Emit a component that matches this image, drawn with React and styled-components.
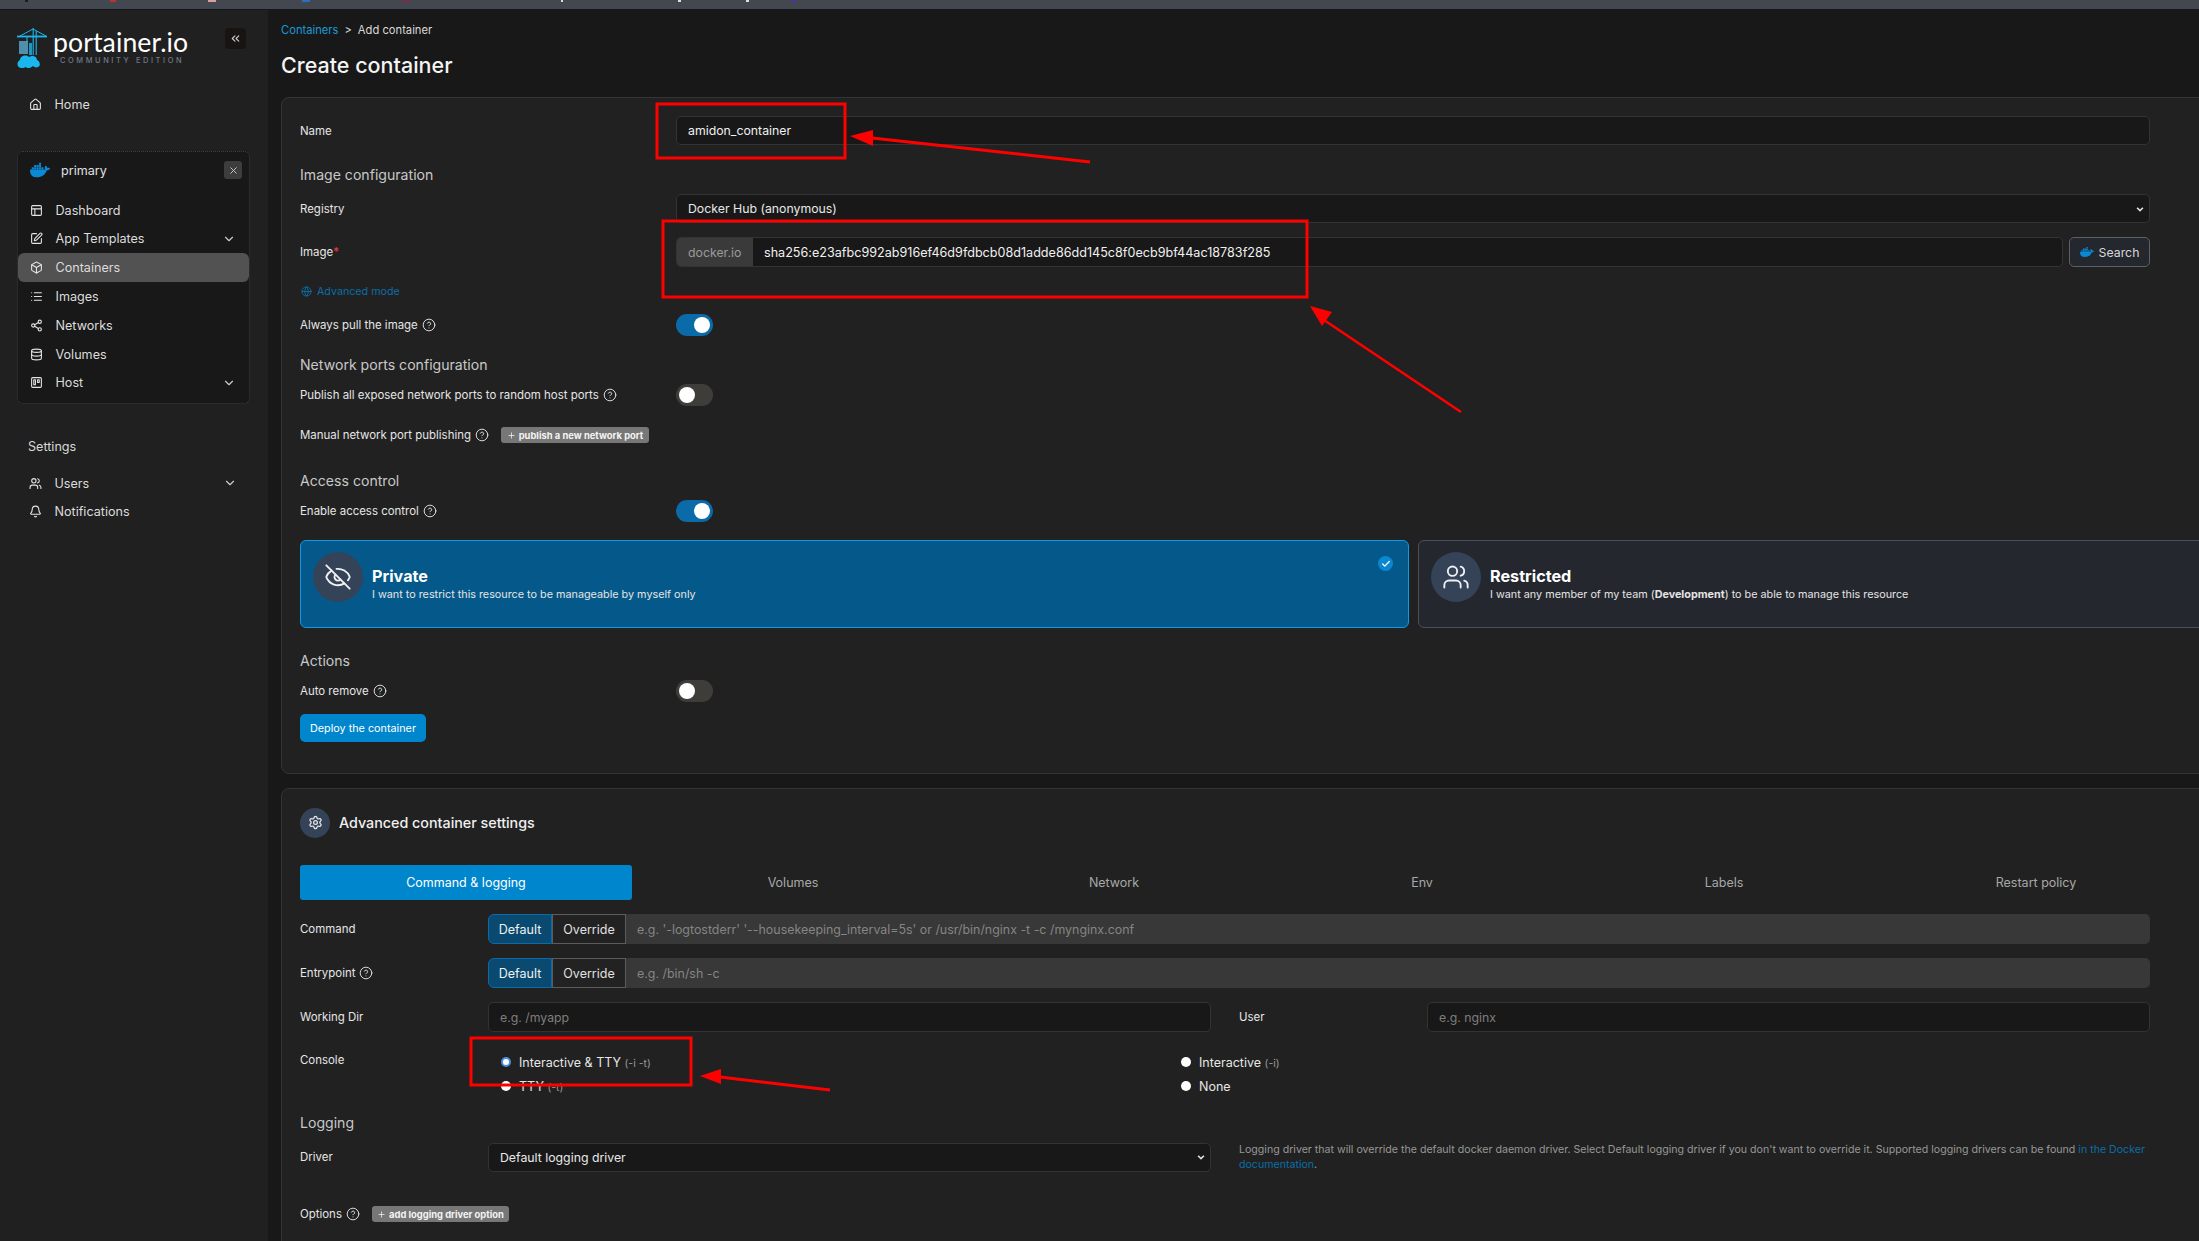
import React from 'react';
import styled, { createGlobalStyle } from 'styled-components';
import {
  Home, Layout, SquarePen, Box, List, Share2, Database, Trello, Users, Bell,
  ChevronDown, ChevronsLeft, X, CircleHelp, EyeOff, Globe, Settings, Plus, Check,
} from 'lucide-react';
import { SiDocker } from 'react-icons/si';

const GlobalStyle = createGlobalStyle`
  html, body {
    margin: 0;
    padding: 0;
    overflow: hidden;
    background: #181818;
  }
  * { box-sizing: border-box; }
`;

const Page = styled.div`
  position: relative;
  width: 2199px;
  height: 1241px;
  overflow: hidden;
  display: flex;
  flex-direction: column;
  font-family: Inter, "Liberation Sans", sans-serif;
  font-size: 12px;
  color: #e0e0e0;
`;

const TopBar = styled.div`
  height: 10px;
  flex: none;
  display: flex;
  align-items: flex-start;
  background: #434750;
  border-bottom: 1px solid #14161a;
`;

const TabMark = styled.span`
  width: ${p => p.$w}px;
  height: 2px;
  margin-left: ${p => p.$gap}px;
  background: ${p => p.$color};
`;

const Shell = styled.div`
  flex: 1;
  display: flex;
  min-height: 0;
`;

const Sidebar = styled.aside`
  width: 268px;
  flex: none;
  background: #202020;
  padding: 18px 18px 0 17px;
`;

const LogoRow = styled.div`
  display: flex;
  justify-content: space-between;
  align-items: flex-start;
  height: 41px;
`;

const Logo = styled.div`
  display: flex;
  align-items: flex-start;
`;

const LogoWords = styled.div`
  margin-left: 6px;
  margin-top: 2px;
`;

const LogoName = styled.div`
  font-family: Lato, Inter, sans-serif;
  font-size: 26.6px;
  line-height: 24px;
  color: #fff;
  letter-spacing: 0.1px;
`;

const LogoSub = styled.div`
  font-size: 7.4px;
  line-height: 9px;
  margin-left: 7px;
  margin-top: 2px;
  letter-spacing: 2.62px;
  white-space: nowrap;
  color: #727988;
  font-weight: 500;
`;

const CollapseButton = styled.div`
  width: 21px;
  height: 21px;
  margin-right: 4px;
  border-radius: 4px;
  background: #181412;
  color: #ccc;
  display: flex;
  align-items: center;
  justify-content: center;
`;

const NavItem = styled.div`
  display: flex;
  align-items: center;
  height: 28.8px;
  padding-left: 12px;
  padding-right: 13px;
  border-radius: 6px;
  background: ${p => (p.$active ? '#525252' : 'transparent')};
  font-size: 12.6px;
  color: #dcdcdc;
  & > svg:first-child {
    flex: none;
    margin-right: 12.5px;
    color: #e4e4e4;
  }
`;

const NavChevron = styled(ChevronDown)`
  margin-left: auto;
  color: #ccc;
`;

const HomeLink = styled(NavItem)`
  margin-top: 21px;
  margin-bottom: 32px;
`;

const EnvBox = styled.div`
  width: 233px;
  height: 253px;
  background: #181818;
  border: 1px dotted #39404c;
  border-radius: 6px;
  padding: 9px 0 0;
`;

const EnvHead = styled.div`
  display: flex;
  align-items: center;
  height: 19px;
  padding: 0 7px 0 12px;
  margin-bottom: 16px;
  font-size: 12.6px;
  color: #e0e0e0;
`;

const EnvName = styled.span`
  margin-left: 11px;
`;

const CloseButton = styled.div`
  width: 18px;
  height: 18px;
  margin-left: auto;
  border-radius: 3px;
  background: #3d3d3d;
  color: #ccc;
  display: flex;
  align-items: center;
  justify-content: center;
`;

const SectionTitle = styled.div`
  font-size: 12.6px;
  color: #d8d8d8;
  margin: 35px 0 15px 11px;
`;

const Main = styled.main`
  flex: 1;
  min-width: 0;
  background: #181818;
  padding-left: 13px;
`;

const Breadcrumb = styled.div`
  height: 16px;
  margin-top: 12px;
  display: flex;
  align-items: center;
  gap: 6px;
  font-size: 11.2px;
  color: #d8d8d8;
`;

const Crumb = styled.span`
  color: #1b9ad9;
`;

const Title = styled.h1`
  margin: 12px 0 0;
  height: 30px;
  line-height: 30px;
  font-size: 21.5px;
  font-weight: 500;
  color: #f4f4f4;
`;

const Card = styled.section`
  width: 2260px;
  margin-top: ${p => p.$mt}px;
  padding: 18px 0 ${p => p.$pb}px 18px;
  background: #212121;
  border: 1px solid #343434;
  border-radius: 8px;
  ${p => (p.$open ? 'height: 470px;' : '')}
`;

const Form = styled.div`
  width: 1850px;
`;

const Row = styled.div`
  display: grid;
  grid-template-columns: ${p => p.$cols || '376px 1fr'};
  align-items: center;
  min-height: ${p => p.$h || 16}px;
  margin-top: ${p => p.$mt || 0}px;
`;

const Label = styled.label`
  display: flex;
  align-items: center;
  gap: 4px;
  font-size: 11.45px;
  font-weight: 400;
  color: #e6e6e6;
  ${p => (p.$indent ? `padding-left: ${p.$indent}px;` : '')}
  & > svg {
    flex: none;
    color: #e6e6e6;
  }
`;

const Required = styled.span`
  color: #e64040;
  margin-left: -4px;
`;

const Heading = styled.h2`
  margin: ${p => p.$mt}px 0 0;
  height: 20px;
  line-height: 20px;
  font-size: 14.1px;
  font-weight: 400;
  color: #c8c8c8;
`;

const TextInput = styled.input`
  width: 100%;
  height: ${p => p.$h || 29}px;
  padding: 0 11px;
  background: #181818;
  border: 1px solid #333;
  border-radius: 5px;
  color: #f0f0f0;
  font: 12.3px Inter, sans-serif;
  outline: none;
  &::placeholder { color: #7e7e7e; }
`;

const Select = styled.select`
  width: 100%;
  height: 29px;
  padding: 0 11px;
  appearance: none;
  background: #181818 url("data:image/svg+xml,%3Csvg xmlns='http://www.w3.org/2000/svg' width='10' height='10' viewBox='0 0 24 24' fill='none' stroke='%23ddd' stroke-width='4'%3E%3Cpath d='M5 9l7 7 7-7'/%3E%3C/svg%3E") no-repeat right 4px center;
  border: 1px solid #333;
  border-radius: 5px;
  color: #e8e8e8;
  font: 12.3px Inter, sans-serif;
`;

const ImageGroup = styled.div`
  display: flex;
  gap: 6px;
`;

const ImageField = styled.div`
  flex: 1;
  display: flex;
  height: 30px;
  background: #181818;
  border: 1px solid #333;
  border-radius: 5px;
  overflow: hidden;
`;

const Addon = styled.div`
  width: 76px;
  flex: none;
  display: flex;
  align-items: center;
  padding-left: 11px;
  background: #3a3a3a;
  color: #9a9a9a;
  font-size: 12.3px;
`;

const ImageValue = styled.input`
  flex: 1;
  padding: 0 11px;
  background: transparent;
  border: 0;
  outline: none;
  color: #f0f0f0;
  font: 12.6px Inter, sans-serif;
`;

const SearchButton = styled.button`
  width: 81px;
  height: 30px;
  display: flex;
  align-items: center;
  justify-content: center;
  gap: 5px;
  background: #24272e;
  border: 1px solid #5b5f66;
  border-radius: 5px;
  color: #d8d8d8;
  font: 12.3px Inter, sans-serif;
`;

const AdvancedLink = styled.div`
  display: flex;
  align-items: center;
  gap: 5px;
  height: 16px;
  margin-top: 16px;
  padding-left: 1px;
  color: #0a6ea8;
  font-size: 10.7px;
`;

const Toggle = styled.div`
  width: 37px;
  height: 22px;
  border-radius: 11px;
  padding: 3px;
  display: flex;
  justify-content: ${p => (p.$on ? 'flex-end' : 'flex-start')};
  background: ${p => (p.$on ? '#0b6aa8' : '#3f3d3a')};
  &::after {
    content: '';
    width: 16px;
    height: 16px;
    border-radius: 50%;
    background: #fff;
  }
`;

const SmallAction = styled.button`
  width: ${p => p.$w}px;
  height: 16px;
  padding: 0;
  display: flex;
  align-items: center;
  justify-content: center;
  gap: 3px;
  background: #777;
  border: 0;
  border-radius: 3px;
  color: #f4f4f4;
  font: 700 9.4px Inter, sans-serif;
  white-space: nowrap;
`;

const ManualLabel = styled.div`
  display: flex;
  align-items: center;
  gap: 12px;
`;

const BoxRow = styled.div`
  display: grid;
  grid-template-columns: 1109px 1109px;
  gap: 9px;
  margin-top: 18px;
`;

const BoxOption = styled.div`
  position: relative;
  height: 88px;
  display: flex;
  padding: 11px 0 0 12px;
  border: 1px solid ${p => (p.$on ? '#0f9be2' : '#4a4f5a')};
  border-radius: 6px;
  background: ${p => (p.$on ? '#05598a' : '#24272e')};
`;

const BoxIcon = styled.div`
  width: 50px;
  height: 50px;
  flex: none;
  border-radius: 50%;
  background: #344358;
  color: #f0f0f0;
  display: flex;
  align-items: center;
  justify-content: center;
`;

const BoxText = styled.div`
  margin-left: 9px;
  padding-top: 14px;
`;

const BoxTitle = styled.div`
  font-size: 16.2px;
  line-height: 20px;
  font-weight: 700;
  color: #fff;
`;

const BoxDesc = styled.div`
  font-size: 10.8px;
  line-height: 16px;
  margin-top: 1px;
  color: #e4e4e4;
`;

const BoxCheck = styled.div`
  position: absolute;
  top: 15px;
  right: 15px;
  width: 15px;
  height: 15px;
  border-radius: 50%;
  background: #0a87cf;
  color: #fff;
  display: flex;
  align-items: center;
  justify-content: center;
`;

const DeployButton = styled.button`
  display: block;
  width: 126px;
  height: 28px;
  margin: 12px 0 0;
  padding: 0;
  background: #0086cc;
  border: 0;
  border-radius: 5px;
  color: #fff;
  font: 10.8px Inter, sans-serif;
`;

const AdvancedHeader = styled.div`
  display: flex;
  align-items: center;
  gap: 9px;
  height: 31px;
  font-size: 14.3px;
  font-weight: 500;
  color: #f0f0f0;
`;

const GearCircle = styled.div`
  width: 30px;
  height: 30px;
  border-radius: 50%;
  background: #344358;
  color: #e8e8e8;
  display: flex;
  align-items: center;
  justify-content: center;
`;

const TabBar = styled.div`
  display: grid;
  grid-template-columns: 332px 322px 320px 296px 308px 316px;
  height: 35px;
  margin-top: 27px;
`;

const Tab = styled.div`
  display: flex;
  align-items: center;
  justify-content: center;
  border-radius: 3px;
  font-size: 12.5px;
  background: ${p => (p.$active ? '#0086cc' : 'transparent')};
  color: ${p => (p.$active ? '#fff' : '#a8a8a8')};
`;

const ModeField = styled.div`
  display: flex;
  height: 30px;
`;

const ModeButton = styled.div`
  width: ${p => p.$w}px;
  flex: none;
  display: flex;
  align-items: center;
  justify-content: center;
  font-size: 12.5px;
  border: 1px solid ${p => (p.$on ? '#0b6aa8' : '#5c5c5c')};
  border-radius: ${p => (p.$on ? '6px 0 0 6px' : '0')};
  background: ${p => (p.$on ? '#0a4a70' : '#222')};
  color: ${p => (p.$on ? '#f0f0f0' : '#e0e0e0')};
`;

const ModeInput = styled.input`
  flex: 1;
  padding: 0 11px;
  background: #383838;
  border: 0;
  border-radius: 0 5px 5px 0;
  color: #eee;
  font: 12.42px Inter, sans-serif;
  outline: none;
  &::placeholder { color: #858585; }
`;

const RadioGrid = styled.div`
  display: grid;
  grid-template-columns: 680px 1fr;
  grid-auto-rows: 24px;
  padding-left: 13px;
  align-items: center;
`;

const RadioItem = styled.div`
  display: flex;
  align-items: center;
  gap: 8px;
  font-size: 12.5px;
  color: #e6e6e6;
`;

const RadioDot = styled.span`
  width: 10px;
  height: 10px;
  flex: none;
  border-radius: 50%;
  background: #fff;
  border: ${p => (p.$on ? '2.5px solid #4a90e2' : '0')};
`;

const RadioHint = styled.small`
  font-size: 10.5px;
  color: #999;
`;

const ConsoleLabel = styled(Label)`
  align-self: start;
  margin-top: 3px;
`;

const HelpText = styled.div`
  padding-left: 28px;
  font-size: 10.62px;
  line-height: 15px;
  color: #979797;
`;

const DocLink = styled.span`
  color: #0a6ea8;
`;

const Overlay = styled.svg`
  position: absolute;
  inset: 0;
  pointer-events: none;
`;

function Help() {
  return <CircleHelp size={14} strokeWidth={1.6} />;
}

function CraneLogo() {
  return (
    <svg width="30" height="41" viewBox="0 0 30 41">
      <g stroke="#1ab6ee" fill="none">
        <path d="M0 8.5h30" strokeWidth="1.8" />
        <path d="M3 8 L16 1 L29 8" strokeWidth="1" />
        <path d="M16.2 0v27M19.2 3v24" strokeWidth="1.1" />
        <path d="M10 8v6" strokeWidth="1" />
      </g>
      <g fill="#1ab6ee">
        <rect x="2" y="13" width="9" height="13" fill="#5fb4d8" opacity="0.75" />
        <path d="M12 15h3v12h-3z" opacity="0.8" />
        <path d="M4 40c-4 0-5-6-1-8 0-4 6-6 9-3 3-2 8-1 8 3 3 1 4 6 1 7-2 1-4 0-5-1-2 2-6 3-7 1-2 1-3 1-5 1z" />
      </g>
    </svg>
  );
}

function Annotations() {
  return (
    <Overlay width="2199" height="1241" viewBox="0 0 2199 1241">
      <g fill="none" stroke="#f00" strokeWidth="3">
        <rect x="657" y="104" width="188" height="54" />
        <rect x="663" y="221" width="644" height="76" />
        <rect x="471" y="1038" width="220" height="47" />
        <path d="M872 138 L1090 162" />
        <path d="M1324 320 L1461 412" strokeWidth="2.5" />
        <path d="M720 1077 L830 1090" />
      </g>
      <g fill="#f00">
        <polygon points="850,136 873,130 873,146" />
        <polygon points="1310,306 1332,312 1322,326" />
        <polygon points="700,1076 721,1069 721,1084" />
      </g>
    </Overlay>
  );
}

const navItems = [
  { icon: Layout, label: 'Dashboard' },
  { icon: SquarePen, label: 'App Templates', more: true },
  { icon: Box, label: 'Containers', active: true },
  { icon: List, label: 'Images' },
  { icon: Share2, label: 'Networks' },
  { icon: Database, label: 'Volumes' },
  { icon: Trello, label: 'Host', more: true },
];

const tabs = ['Command & logging', 'Volumes', 'Network', 'Env', 'Labels', 'Restart policy'];

const tabMarks = [
  [3, 25, '#1c1c1c'], [6, 82, '#c03030'], [8, 92, '#d8a0a0'], [8, 86, '#2a6fc0'],
  [8, 92, '#7a2a4a'], [2, 151, '#ddd'], [3, 115, '#ddd'], [3, 65, '#ddd'], [3, 43, '#5a2ac0'],
];

export default function App() {
  return (
    <Page>
      <GlobalStyle />
      <TopBar>
        {tabMarks.map(([w, gap, color], i) => (
          <TabMark key={i} $w={w} $gap={gap} $color={color} />
        ))}
      </TopBar>
      <Shell>
        <Sidebar>
          <LogoRow>
            <Logo>
              <CraneLogo />
              <LogoWords>
                <LogoName>portainer.io</LogoName>
                <LogoSub>COMMUNITY EDITION</LogoSub>
              </LogoWords>
            </Logo>
            <CollapseButton><ChevronsLeft size={13} /></CollapseButton>
          </LogoRow>
          <HomeLink><Home size={13} />Home</HomeLink>
          <EnvBox>
            <EnvHead>
              <SiDocker size={20} color="#0a8ad6" />
              <EnvName>primary</EnvName>
              <CloseButton><X size={11} /></CloseButton>
            </EnvHead>
            {navItems.map(item => (
              <NavItem key={item.label} $active={item.active}>
                <item.icon size={13} />
                {item.label}
                {item.more && <NavChevron size={14} />}
              </NavItem>
            ))}
          </EnvBox>
          <SectionTitle>Settings</SectionTitle>
          <NavItem><Users size={13} />Users<NavChevron size={14} /></NavItem>
          <NavItem><Bell size={13} />Notifications</NavItem>
        </Sidebar>
        <Main>
          <Breadcrumb>
            <Crumb>Containers</Crumb>
            <span>&gt;</span>
            <span>Add container</span>
          </Breadcrumb>
          <Title>Create container</Title>
          <Card $mt={17} $pb={31}>
            <Form>
              <Row $h={29}>
                <Label>Name</Label>
                <TextInput readOnly value="amidon_container" />
              </Row>
              <Heading $mt={20}>Image configuration</Heading>
              <Row $h={29} $mt={9}>
                <Label>Registry</Label>
                <Select defaultValue="hub"><option value="hub">Docker Hub (anonymous)</option></Select>
              </Row>
              <Row $h={30} $mt={14}>
                <Label>Image<Required>*</Required></Label>
                <ImageGroup>
                  <ImageField>
                    <Addon>docker.io</Addon>
                    <ImageValue readOnly value="sha256:e23afbc992ab916ef46d9fdbcb08d1adde86dd145c8f0ecb9bf44ac18783f285" />
                  </ImageField>
                  <SearchButton><SiDocker size={14} color="#0a8ad6" />Search</SearchButton>
                </ImageGroup>
              </Row>
              <AdvancedLink><Globe size={11} />Advanced mode</AdvancedLink>
              <Row $h={22} $mt={15}>
                <Label>Always pull the image<Help /></Label>
                <Toggle $on />
              </Row>
              <Heading $mt={19}>Network ports configuration</Heading>
              <Row $h={22} $mt={9}>
                <Label>Publish all exposed network ports to random host ports<Help /></Label>
                <Toggle />
              </Row>
              <Row $h={16} $mt={21}>
                <ManualLabel>
                  <Label>Manual network port publishing<Help /></Label>
                  <SmallAction $w={148}><Plus size={9} />publish a new network port</SmallAction>
                </ManualLabel>
              </Row>
              <Heading $mt={28}>Access control</Heading>
              <Row $h={22} $mt={9}>
                <Label>Enable access control<Help /></Label>
                <Toggle $on />
              </Row>
              <BoxRow>
                <BoxOption $on>
                  <BoxIcon><EyeOff size={28} strokeWidth={1.6} /></BoxIcon>
                  <BoxText>
                    <BoxTitle>Private</BoxTitle>
                    <BoxDesc>I want to restrict this resource to be manageable by myself only</BoxDesc>
                  </BoxText>
                  <BoxCheck><Check size={10} strokeWidth={3} /></BoxCheck>
                </BoxOption>
                <BoxOption>
                  <BoxIcon><Users size={28} strokeWidth={1.6} /></BoxIcon>
                  <BoxText>
                    <BoxTitle>Restricted</BoxTitle>
                    <BoxDesc>I want any member of my team (<b>Development</b>) to be able to manage this resource</BoxDesc>
                  </BoxText>
                </BoxOption>
              </BoxRow>
              <Heading $mt={23}>Actions</Heading>
              <Row $h={22} $mt={9}>
                <Label>Auto remove<Help /></Label>
                <Toggle />
              </Row>
              <DeployButton>Deploy the container</DeployButton>
            </Form>
          </Card>
          <Card $mt={14} $pb={0} $open>
            <Form>
              <AdvancedHeader>
                <GearCircle><Settings size={15} /></GearCircle>
                Advanced container settings
              </AdvancedHeader>
              <TabBar>
                {tabs.map((t, i) => <Tab key={t} $active={i === 0}>{t}</Tab>)}
              </TabBar>
              <Row $cols="188px 1fr" $h={30} $mt={14}>
                <Label>Command</Label>
                <ModeField>
                  <ModeButton $w={64} $on>Default</ModeButton>
                  <ModeButton $w={74}>Override</ModeButton>
                  <ModeInput placeholder="e.g. '-logtostderr' '--housekeeping_interval=5s' or /usr/bin/nginx -t -c /mynginx.conf" />
                </ModeField>
              </Row>
              <Row $cols="188px 1fr" $h={30} $mt={14}>
                <Label>Entrypoint<Help /></Label>
                <ModeField>
                  <ModeButton $w={64} $on>Default</ModeButton>
                  <ModeButton $w={74}>Override</ModeButton>
                  <ModeInput placeholder="e.g. /bin/sh -c" />
                </ModeField>
              </Row>
              <Row $cols="188px 723px 216px 1fr" $h={30} $mt={14}>
                <Label>Working Dir</Label>
                <TextInput $h={30} placeholder="e.g. /myapp" />
                <Label $indent={28}>User</Label>
                <TextInput $h={30} placeholder="e.g. nginx" />
              </Row>
              <Row $cols="188px 1fr" $mt={18}>
                <ConsoleLabel>Console</ConsoleLabel>
                <RadioGrid>
                  <RadioItem><RadioDot $on /><span>Interactive &amp; TTY <RadioHint>(-i -t)</RadioHint></span></RadioItem>
                  <RadioItem><RadioDot /><span>Interactive <RadioHint>(-i)</RadioHint></span></RadioItem>
                  <RadioItem><RadioDot /><span>TTY <RadioHint>(-t)</RadioHint></span></RadioItem>
                  <RadioItem><RadioDot /><span>None</span></RadioItem>
                </RadioGrid>
              </Row>
              <Heading $mt={15}>Logging</Heading>
              <Row $cols="188px 723px 1fr" $h={29} $mt={9}>
                <Label>Driver</Label>
                <Select defaultValue="default"><option value="default">Default logging driver</option></Select>
                <HelpText>
                  Logging driver that will override the default docker daemon driver. Select Default logging driver if you don't want to override it. Supported logging drivers can be found <DocLink>in the Docker documentation</DocLink>.
                </HelpText>
              </Row>
              <Row $h={16} $mt={34}>
                <ManualLabel>
                  <Label>Options<Help /></Label>
                  <SmallAction $w={137}><Plus size={9} />add logging driver option</SmallAction>
                </ManualLabel>
              </Row>
            </Form>
          </Card>
        </Main>
      </Shell>
      <Annotations />
    </Page>
  );
}
